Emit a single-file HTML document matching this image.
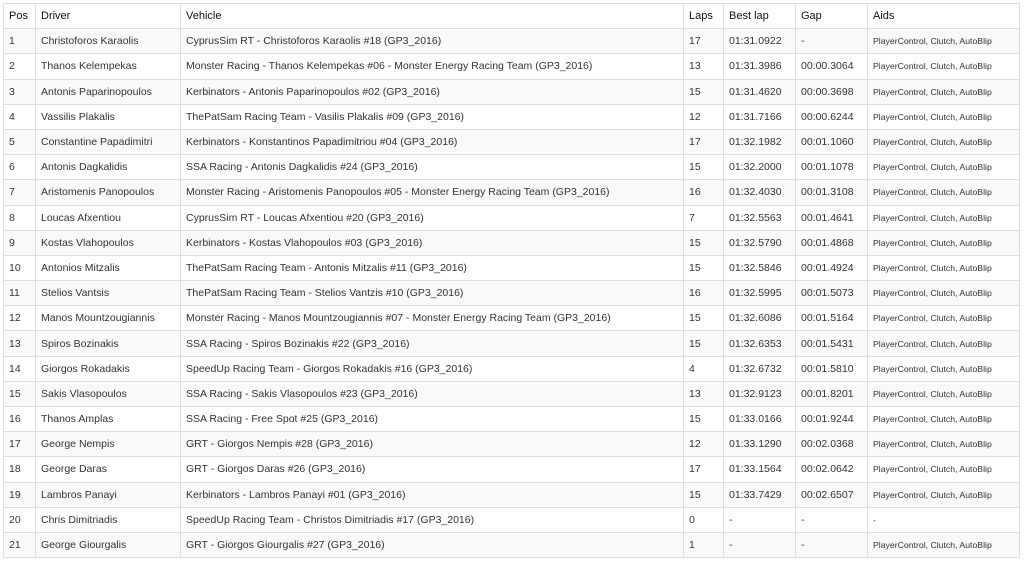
<!DOCTYPE html>
<html><head><meta charset="utf-8"><style>
body{margin:0;background:#fff;font-family:"Liberation Sans",Arial,sans-serif;}
table{position:absolute;left:3px;top:3px;width:1017px;border-collapse:collapse;font-size:10.5px;color:#333;table-layout:fixed;}
td,th{border:1px solid #ddd;padding:0 0 0 5px;height:24.2px;text-align:left;white-space:nowrap;overflow:hidden;}
th{font-weight:normal;font-size:11px;color:#111;}
tbody tr:nth-child(odd){background:#f9f9f9;}
td.a{font-size:8.7px;}
</style></head><body>
<table>
<colgroup><col style="width:32px"><col style="width:145px"><col style="width:503px"><col style="width:40px"><col style="width:72px"><col style="width:72px"><col></colgroup>
<thead><tr><th>Pos</th><th>Driver</th><th>Vehicle</th><th>Laps</th><th>Best lap</th><th>Gap</th><th>Aids</th></tr></thead>
<tbody>
<tr><td>1</td><td>Christoforos Karaolis</td><td>CyprusSim RT - Christoforos Karaolis #18 (GP3_2016)</td><td>17</td><td>01:31.0922</td><td>-</td><td class="a">PlayerControl, Clutch, AutoBlip</td></tr>
<tr><td>2</td><td>Thanos Kelempekas</td><td>Monster Racing - Thanos Kelempekas #06 - Monster Energy Racing Team (GP3_2016)</td><td>13</td><td>01:31.3986</td><td>00:00.3064</td><td class="a">PlayerControl, Clutch, AutoBlip</td></tr>
<tr><td>3</td><td>Antonis Paparinopoulos</td><td>Kerbinators - Antonis Paparinopoulos #02 (GP3_2016)</td><td>15</td><td>01:31.4620</td><td>00:00.3698</td><td class="a">PlayerControl, Clutch, AutoBlip</td></tr>
<tr><td>4</td><td>Vassilis Plakalis</td><td>ThePatSam Racing Team - Vasilis Plakalis #09 (GP3_2016)</td><td>12</td><td>01:31.7166</td><td>00:00.6244</td><td class="a">PlayerControl, Clutch, AutoBlip</td></tr>
<tr><td>5</td><td>Constantine Papadimitri</td><td>Kerbinators - Konstantinos Papadimitriou #04 (GP3_2016)</td><td>17</td><td>01:32.1982</td><td>00:01.1060</td><td class="a">PlayerControl, Clutch, AutoBlip</td></tr>
<tr><td>6</td><td>Antonis Dagkalidis</td><td>SSA Racing - Antonis Dagkalidis #24 (GP3_2016)</td><td>15</td><td>01:32.2000</td><td>00:01.1078</td><td class="a">PlayerControl, Clutch, AutoBlip</td></tr>
<tr><td>7</td><td>Aristomenis Panopoulos</td><td>Monster Racing - Aristomenis Panopoulos #05 - Monster Energy Racing Team (GP3_2016)</td><td>16</td><td>01:32.4030</td><td>00:01.3108</td><td class="a">PlayerControl, Clutch, AutoBlip</td></tr>
<tr><td>8</td><td>Loucas Afxentiou</td><td>CyprusSim RT - Loucas Afxentiou #20 (GP3_2016)</td><td>7</td><td>01:32.5563</td><td>00:01.4641</td><td class="a">PlayerControl, Clutch, AutoBlip</td></tr>
<tr><td>9</td><td>Kostas Vlahopoulos</td><td>Kerbinators - Kostas Vlahopoulos #03 (GP3_2016)</td><td>15</td><td>01:32.5790</td><td>00:01.4868</td><td class="a">PlayerControl, Clutch, AutoBlip</td></tr>
<tr><td>10</td><td>Antonios Mitzalis</td><td>ThePatSam Racing Team - Antonis Mitzalis #11 (GP3_2016)</td><td>15</td><td>01:32.5846</td><td>00:01.4924</td><td class="a">PlayerControl, Clutch, AutoBlip</td></tr>
<tr><td>11</td><td>Stelios Vantsis</td><td>ThePatSam Racing Team - Stelios Vantzis #10 (GP3_2016)</td><td>16</td><td>01:32.5995</td><td>00:01.5073</td><td class="a">PlayerControl, Clutch, AutoBlip</td></tr>
<tr><td>12</td><td>Manos Mountzougiannis</td><td>Monster Racing - Manos Mountzougiannis #07 - Monster Energy Racing Team (GP3_2016)</td><td>15</td><td>01:32.6086</td><td>00:01.5164</td><td class="a">PlayerControl, Clutch, AutoBlip</td></tr>
<tr><td>13</td><td>Spiros Bozinakis</td><td>SSA Racing - Spiros Bozinakis #22 (GP3_2016)</td><td>15</td><td>01:32.6353</td><td>00:01.5431</td><td class="a">PlayerControl, Clutch, AutoBlip</td></tr>
<tr><td>14</td><td>Giorgos Rokadakis</td><td>SpeedUp Racing Team - Giorgos Rokadakis #16 (GP3_2016)</td><td>4</td><td>01:32.6732</td><td>00:01.5810</td><td class="a">PlayerControl, Clutch, AutoBlip</td></tr>
<tr><td>15</td><td>Sakis Vlasopoulos</td><td>SSA Racing - Sakis Vlasopoulos #23 (GP3_2016)</td><td>13</td><td>01:32.9123</td><td>00:01.8201</td><td class="a">PlayerControl, Clutch, AutoBlip</td></tr>
<tr><td>16</td><td>Thanos Amplas</td><td>SSA Racing - Free Spot #25 (GP3_2016)</td><td>15</td><td>01:33.0166</td><td>00:01.9244</td><td class="a">PlayerControl, Clutch, AutoBlip</td></tr>
<tr><td>17</td><td>George Nempis</td><td>GRT - Giorgos Nempis #28 (GP3_2016)</td><td>12</td><td>01:33.1290</td><td>00:02.0368</td><td class="a">PlayerControl, Clutch, AutoBlip</td></tr>
<tr><td>18</td><td>George Daras</td><td>GRT - Giorgos Daras #26 (GP3_2016)</td><td>17</td><td>01:33.1564</td><td>00:02.0642</td><td class="a">PlayerControl, Clutch, AutoBlip</td></tr>
<tr><td>19</td><td>Lambros Panayi</td><td>Kerbinators - Lambros Panayi #01 (GP3_2016)</td><td>15</td><td>01:33.7429</td><td>00:02.6507</td><td class="a">PlayerControl, Clutch, AutoBlip</td></tr>
<tr><td>20</td><td>Chris Dimitriadis</td><td>SpeedUp Racing Team - Christos Dimitriadis #17 (GP3_2016)</td><td>0</td><td>-</td><td>-</td><td class="a">-</td></tr>
<tr><td>21</td><td>George Giourgalis</td><td>GRT - Giorgos Giourgalis #27 (GP3_2016)</td><td>1</td><td>-</td><td>-</td><td class="a">PlayerControl, Clutch, AutoBlip</td></tr>
</tbody></table>
</body></html>
